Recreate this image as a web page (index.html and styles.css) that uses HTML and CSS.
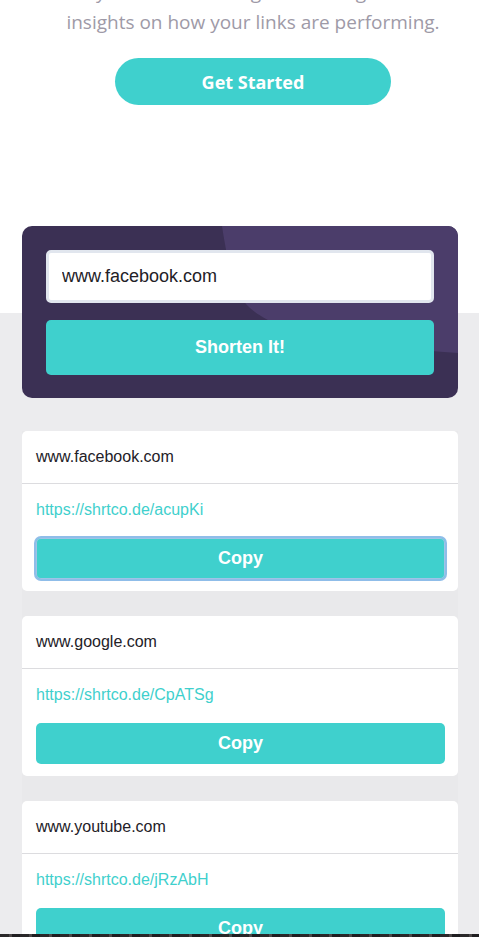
FILE: index.html
```html
<!DOCTYPE html>
<html lang="en">
<head>
<meta charset="utf-8">
<meta name="viewport" content="width=device-width, initial-scale=1">
<title>Shortly</title>
<link rel="stylesheet" href="styles.css">
</head>
<body>
<section class="hero">
  <p class="hero-text">Build your brand’s recognition and get detailed<br>insights on how your links are performing.</p>
  <a class="btn-start" href="#">Get Started</a>
</section>
<section class="main">
  <form class="shorten">
    <svg class="shorten-bg" viewBox="0 0 436 172" preserveAspectRatio="none" aria-hidden="true">
      <path d="M200 0 C206 40 214 70 228 82 C244 96 262 102 300 110 C340 118 390 124 436 127 L436 0 Z" fill="#4b3d6a"/>
    </svg>
    <input class="url-input" type="text" value="www.facebook.com">
    <button class="btn-shorten" type="button">Shorten It!</button>
  </form>
  <ul class="results">
    <li class="card">
      <div class="card-orig">www.facebook.com</div>
      <div class="card-body">
        <a class="card-link" href="#">https://shrtco.de/acupKi</a>
        <button class="btn-copy is-focused" type="button">Copy</button>
      </div>
    </li>
    <li class="card">
      <div class="card-orig">www.google.com</div>
      <div class="card-body">
        <a class="card-link" href="#">https://shrtco.de/CpATSg</a>
        <button class="btn-copy" type="button">Copy</button>
      </div>
    </li>
    <li class="card">
      <div class="card-orig">www.youtube.com</div>
      <div class="card-body">
        <a class="card-link" href="#">https://shrtco.de/jRzAbH</a>
        <button class="btn-copy" type="button">Copy</button>
      </div>
    </li>
  </ul>
</section>
<div class="bottom-strip"></div>
</body>
</html>
```
FILE: styles.css
```css
* { box-sizing: border-box; }
html, body { margin: 0; padding: 0; }
body {
  background: #ececee;
  font-family: "Liberation Sans", Arial, sans-serif;
  color: #232127;
  overflow: hidden;
}
.hero {
  background: #ffffff;
  display: flex;
  flex-direction: column;
  align-items: center;
  padding: 0 0 208px 27px;
}
.hero-text {
  margin: -23px 0 0;
  font-family: "Open Sans", "Noto Sans", sans-serif;
  font-size: 19px;
  line-height: 30px;
  color: #9e9aa7;
  text-align: center;
  white-space: nowrap;
}
.btn-start {
  margin-top: 21px;
  width: 276px;
  height: 47px;
  border-radius: 24px;
  background: #3fd0cd;
  color: #fff;
  font-family: "Open Sans", "Noto Sans", sans-serif;
  font-weight: 700;
  font-size: 18px;
  display: flex;
  align-items: center;
  justify-content: center;
  text-decoration: none;
}
.main {
  display: flow-root;
  padding: 0 21px 40px 22px;
  background: #ececee;
}
.shorten {
  position: relative;
  margin: -87px 0 0;
  background: #3b3054;
  border-radius: 10px;
  padding: 24px 24px 23px;
  display: flex;
  flex-direction: column;
  gap: 17px;
  overflow: hidden;
}
.shorten-bg {
  position: absolute;
  inset: 0;
  width: 100%;
  height: 100%;
}
.url-input {
  position: relative;
  height: 53px;
  border: 3px solid #e1e6ee;
  border-radius: 5px;
  padding: 0 13px;
  font-family: "Liberation Sans", Arial, sans-serif;
  font-size: 18px;
  color: #232127;
  background: #fff;
  outline: none;
}
.btn-shorten {
  position: relative;
  height: 55px;
  border: none;
  border-radius: 5px;
  background: #3fd0cd;
  color: #fff;
  font-family: "Liberation Sans", Arial, sans-serif;
  font-weight: 700;
  font-size: 18px;
}
.results {
  list-style: none;
  margin: 33px 0 0;
  padding: 0;
  display: flex;
  flex-direction: column;
  gap: 25px;
  background: #e9e9eb;
}
.card {
  background: #fff;
  border-radius: 5px;
}
.card-orig {
  height: 53px;
  padding: 0 14px;
  display: flex;
  align-items: center;
  font-size: 16px;
  border-bottom: 1px solid #dcdcdf;
}
.card-body {
  padding: 14px 13px 12px 14px;
  display: flex;
  flex-direction: column;
}
.card-link {
  height: 24px;
  line-height: 24px;
  font-size: 16px;
  color: #3fd0cd;
  text-decoration: none;
}
.btn-copy {
  margin-top: 16px;
  height: 41px;
  border: none;
  border-radius: 5px;
  background: #3fd0cd;
  color: #fff;
  font-family: "Liberation Sans", Arial, sans-serif;
  font-weight: 700;
  font-size: 18px;
}
.btn-copy.is-focused {
  box-shadow: 0 0 0 1px #9fc4e6 inset, 0 0 0 2px #8fbde9;
}
.bottom-strip {
  position: fixed;
  left: 0;
  right: 0;
  bottom: 0;
  height: 3px;
  background: repeating-linear-gradient(90deg, #2a2829 0 9px, #4a4646 9px 12px, #1f1e20 12px 20px);
}
```
